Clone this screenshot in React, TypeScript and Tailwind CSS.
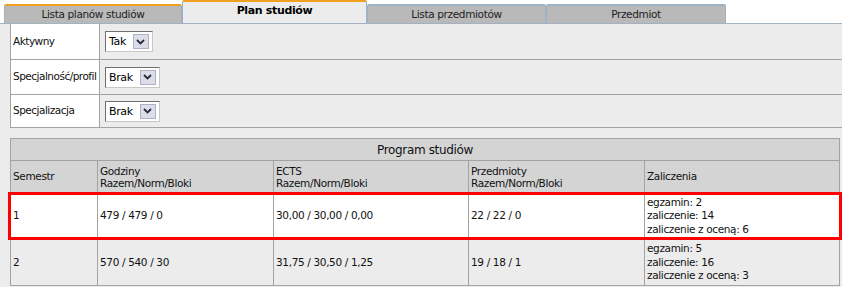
import React from 'react';

const FONT = "font-['DejaVu_Sans',Verdana,sans-serif]";

const tabs = [
  { label: 'Lista planów studiów', active: false, w: 'w-[178px]', top: 'border-t-[#f0a020]' },
  { label: 'Plan studiów', active: true, w: 'w-[185px]', top: 'border-t-[#f0a020]' },
  { label: 'Lista przedmiotów', active: false, w: 'w-[179px]', top: 'border-t-[#9fb2c4]' },
  { label: 'Przedmiot', active: false, w: 'w-[180px]', top: 'border-t-[#9fb2c4]' },
];

const formRows = [
  { label: 'Aktywny', value: 'Tak', h: 'h-[36px]' },
  { label: 'Specjalność/profil', value: 'Brak', h: 'h-[35px]' },
  { label: 'Specjalizacja', value: 'Brak', h: 'h-[33px]' },
];

const semesters = [
  {
    no: '1',
    hours: '479 / 479 / 0',
    ects: '30,00 / 30,00 / 0,00',
    subjects: '22 / 22 / 0',
    credits: ['egzamin: 2', 'zaliczenie: 14', 'zaliczenie z oceną: 6'],
    bg: 'bg-white',
    h: 'h-[47px]',
  },
  {
    no: '2',
    hours: '570 / 540 / 30',
    ects: '31,75 / 30,50 / 1,25',
    subjects: '19 / 18 / 1',
    credits: ['egzamin: 5', 'zaliczenie: 16', 'zaliczenie z oceną: 3'],
    bg: 'bg-[#ececec]',
    h: 'h-[46px]',
  },
];

const GRID = 'grid grid-cols-[87px_176px_195px_176px_195px]';
const CELL = 'border-r border-b border-[#a3a3a3] flex items-center pl-[2px]';

function Select({ value }: { value: string }) {
  return (
    <div className="inline-flex items-center h-[21px] bg-white border border-[#6f6f6f] border-b-[#c8c8c8] border-r-[#c8c8c8] pl-[3px] pr-[3px] gap-[7px]">
      <span className="text-[11px] leading-none text-black">{value}</span>
      <span className="w-[16px] h-[15px] bg-[#dcdde8] border border-[#aeb1c6] flex items-center justify-center">
        <svg width="9" height="6" viewBox="0 0 9 6">
          <path d="M1 1 L4.5 4.5 L8 1" fill="none" stroke="#2b2b40" strokeWidth="1.8" />
        </svg>
      </span>
    </div>
  );
}

export default function App() {
  return (
    <div className={`w-[842px] h-[287px] overflow-hidden bg-[#ececec] text-[10.5px] tracking-[-0.35px] text-[#111] ${FONT}`}>
      {/* Tabs */}
      <div className="h-[24px] bg-white border-b border-[#a4b2bf] flex items-end pl-[4px]">
        {tabs.map((t) => (
          <div
            key={t.label}
            className={`${t.w} ${t.top} flex items-center justify-center border-t-2 border-l border-r border-l-[#9fb2c4] border-r-[#9fb2c4] rounded-t-[2px] ${
              t.active ? 'h-[23px] bg-[#ececec] font-bold text-[11px] text-black pb-[2px]' : 'h-[19px] bg-[#b9b9b9] text-[#222]'
            }`}
          >
            {t.label}
          </div>
        ))}
      </div>

      {/* Filters */}
      <div className="ml-[10px] border-l border-[#a3a3a3]">
        {formRows.map((r) => (
          <div key={r.label} className={`${r.h} flex border-b border-[#a3a3a3]`}>
            <div className="w-[89px] bg-white border-r border-[#a3a3a3] flex items-center pl-[2px] whitespace-nowrap tracking-[-0.5px]">
              {r.label}
            </div>
            <div className="flex-1 flex items-center pl-[5px]">
              <Select value={r.value} />
            </div>
          </div>
        ))}
      </div>

      {/* Program */}
      <div className="relative mt-[10px] ml-[10px] w-[830px] border-l border-t border-[#a3a3a3]">
        <div className="h-[22px] bg-[#d4d4d4] border-r border-b border-[#a3a3a3] flex items-center justify-center text-[12px]">
          Program studiów
        </div>
        <div className={`${GRID} h-[32px] bg-[#d4d4d4]`}>
          <div className={CELL}>Semestr</div>
          <div className={`${CELL} flex-col !items-start justify-center leading-[12px]`}>
            <span>Godziny</span>
            <span>Razem/Norm/Bloki</span>
          </div>
          <div className={`${CELL} flex-col !items-start justify-center leading-[12px]`}>
            <span>ECTS</span>
            <span>Razem/Norm/Bloki</span>
          </div>
          <div className={`${CELL} flex-col !items-start justify-center leading-[12px]`}>
            <span>Przedmioty</span>
            <span>Razem/Norm/Bloki</span>
          </div>
          <div className={CELL}>Zaliczenia</div>
        </div>
        {semesters.map((s) => (
          <div key={s.no} className={`${GRID} ${s.h} ${s.bg}`}>
            <div className={CELL}>{s.no}</div>
            <div className={CELL}>{s.hours}</div>
            <div className={CELL}>{s.ects}</div>
            <div className={CELL}>{s.subjects}</div>
            <div className={`${CELL} flex-col !items-start justify-center leading-[13.5px]`}>
              {s.credits.map((c) => (
                <span key={c}>{c}</span>
              ))}
            </div>
          </div>
        ))}
        {/* highlighted row frame */}
        <div className="absolute left-[-3px] top-[53px] w-[834px] h-[48px] border-[3px] border-[#ff0000] pointer-events-none" />
      </div>
    </div>
  );
}
